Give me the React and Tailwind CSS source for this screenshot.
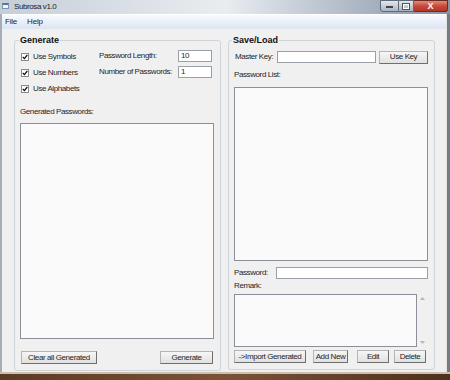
import React from "react";

const btn =
  "flex items-center justify-center h-[13px] bg-gradient-to-b from-[#f6f6f6] to-[#e1e1e1] border border-[#b4b4b4] border-r-[#6e6e6e] border-b-[#6e6e6e] text-[#1f1f1f] leading-none";
const input = "h-[12px] bg-white border border-[#9aa0a8] leading-none";

function Check({ label }) {
  return (
    <div className="flex items-center h-[16px]">
      <div className="w-[8px] h-[8px] bg-white border border-[#8a8a8a] flex items-center justify-center">
        <svg width="6" height="6" viewBox="0 0 6 6">
          <path d="M0.8 3 L2.4 4.6 L5.3 1" fill="none" stroke="#111" strokeWidth="1.3" />
        </svg>
      </div>
      <span className="ml-[4px]">{label}</span>
    </div>
  );
}

function GroupBox({ title, titleOffset, children, className }) {
  return (
    <div className={`border border-[#cdd4da] rounded-[3px] flex flex-col ${className}`}>
      <div className={`h-[11px] -mt-[6px] flex ${titleOffset}`}>
        <span className="bg-[#f0f0f0] px-[1px] font-bold text-[9px] tracking-normal leading-[11px] text-[#111]">
          {title}
        </span>
      </div>
      {children}
    </div>
  );
}

export default function App() {
  return (
    <div className="w-[450px] h-[380px] flex flex-col font-['Liberation_Sans',Arial,sans-serif] text-[8px] tracking-[-0.4px] text-[#1f1f1f] overflow-hidden">
      {/* title bar */}
      <div className="h-[14px] flex items-start bg-gradient-to-r from-[#c6ced8] via-[#e9edf1] to-[#8593a6]">
        <div className="mt-[3px] ml-[2px] w-[7px] h-[6px] bg-[#f4f6f8] border border-[#7f95ad] border-t-[2px] border-t-[#4d79b0]" />
        <span className="ml-[5px] leading-[13px] text-[8px] text-[#1a1a1a]">Subrosa v1.0</span>
        <div className="ml-auto mr-[2px] flex h-[12px]">
          <div className="w-[19px] border border-[#5f6a78] rounded-bl-[3px] bg-gradient-to-b from-[#e3e8ee] to-[#a9b4c2] flex items-end justify-center pb-[3px]">
            <div className="w-[7px] h-[2px] bg-white border-[0.5px] border-[#444]" />
          </div>
          <div className="w-[15px] border border-l-0 border-[#5f6a78] bg-gradient-to-b from-[#e3e8ee] to-[#a9b4c2] flex items-center justify-center">
            <div className="w-[6px] h-[5px] border border-white outline outline-[0.5px] outline-[#555]" />
          </div>
          <div className="w-[34px] border border-l-0 border-[#6b2a22] rounded-br-[3px] bg-gradient-to-b from-[#e08c7c] via-[#c9493a] to-[#b53626] flex items-center justify-center">
            <span className="text-white font-bold text-[9px] leading-none tracking-normal">X</span>
          </div>
        </div>
      </div>

      <div className="flex flex-1">
        <div className="w-[2px] bg-[#a7adb5]" />
        <div className="flex-1 flex flex-col">
          {/* menu */}
          <div className="h-[15px] flex items-center border-t border-white bg-gradient-to-b from-[#f8fafd] to-[#dbe5f2] text-[8px] tracking-[-0.2px]">
            <span className="ml-[3px]">File</span>
            <span className="ml-[10px]">Help</span>
          </div>

          {/* client */}
          <div className="flex-1 bg-[#f0f0f0] flex items-start pt-[11px]">
            {/* Generate */}
            <GroupBox title="Generate" titleOffset="ml-[4px]" className="ml-[12px] w-[207px] h-[331px]">
              <div className="flex items-start">
                <div className="ml-[6px] mt-[3px] w-[78px] flex flex-col">
                  <Check label="Use Symbols" />
                  <Check label="Use Numbers" />
                  <Check label="Use Alphabets" />
                </div>
                <div className="mt-[2px] flex flex-col">
                  <div className="flex items-center h-[16px]">
                    <span className="w-[79px]">Password Length:</span>
                    <div className={`${input} w-[34px] px-[2px] flex items-center`}>10</div>
                  </div>
                  <div className="flex items-center h-[16px]">
                    <span className="w-[79px]">Number of Passwords:</span>
                    <div className={`${input} w-[34px] px-[2px] flex items-center`}>1</div>
                  </div>
                </div>
              </div>
              <div className="ml-[5px] mt-[10px] h-[10px] leading-[10px]">Generated Passwords:</div>
              <div className="ml-[5px] mt-[6px] w-[194px] h-[216px] bg-[#fafafa] border border-[#8b9098]" />
              <div className="flex mt-[12px] ml-[6px] mr-[7px]">
                <div className={`${btn} w-[76px]`}>Clear all Generated</div>
                <div className={`${btn} w-[53px] ml-auto`}>Generate</div>
              </div>
            </GroupBox>

            {/* Save/Load */}
            <GroupBox title="Save/Load" titleOffset="ml-[3px]" className="ml-[7px] w-[207px] h-[330px]">
              <div className="flex items-center h-[16px] mt-[3px]">
                <span className="ml-[6px] w-[42px]">Master Key:</span>
                <div className={`${input} w-[99px]`} />
                <div className={`${btn} w-[49px] ml-[3px]`}>Use Key</div>
              </div>
              <div className="ml-[5px] mt-[5px] h-[10px] leading-[10px]">Password List:</div>
              <div className="ml-[5px] mt-[7px] w-[194px] h-[174px] bg-[#fafafa] border border-[#8b9098]" />
              <div className="flex items-center mt-[6px] h-[12px]">
                <span className="ml-[5px] w-[42px]">Password:</span>
                <div className={`${input} w-[152px]`} />
              </div>
              <div className="ml-[5px] mt-[2px] h-[10px] leading-[10px]">Remark:</div>
              <div className="flex mt-[3px]">
                <div className="ml-[5px] w-[183px] h-[53px] bg-[#fafafa] border border-[#8b9098]" />
                <div className="w-[11px] flex flex-col items-center justify-between py-[3px] text-[#b8b8b8]">
                  <svg width="5" height="3" viewBox="0 0 5 3">
                    <path d="M0 3 L2.5 0 L5 3 Z" fill="#b5b5b5" />
                  </svg>
                  <svg width="5" height="3" viewBox="0 0 5 3">
                    <path d="M0 0 L2.5 3 L5 0 Z" fill="#b5b5b5" />
                  </svg>
                </div>
              </div>
              <div className="flex mt-[3px] ml-[5px]">
                <div className={`${btn} w-[72px]`}>-&gt;Import Generated</div>
                <div className={`${btn} w-[35px] ml-[7px]`}>Add New</div>
                <div className={`${btn} w-[32px] ml-[9px]`}>Edit</div>
                <div className={`${btn} w-[32px] ml-[5px]`}>Delete</div>
              </div>
            </GroupBox>
          </div>
        </div>
        <div className="w-[4px] border-l border-[#e2e2e2] bg-[#777c84]" />
      </div>
      <div className="h-[2px] bg-[#cbbfae]" />
      <div className="h-[6px] bg-gradient-to-r from-[#5b3a24] via-[#7a5238] to-[#4e301c]" />
    </div>
  );
}
